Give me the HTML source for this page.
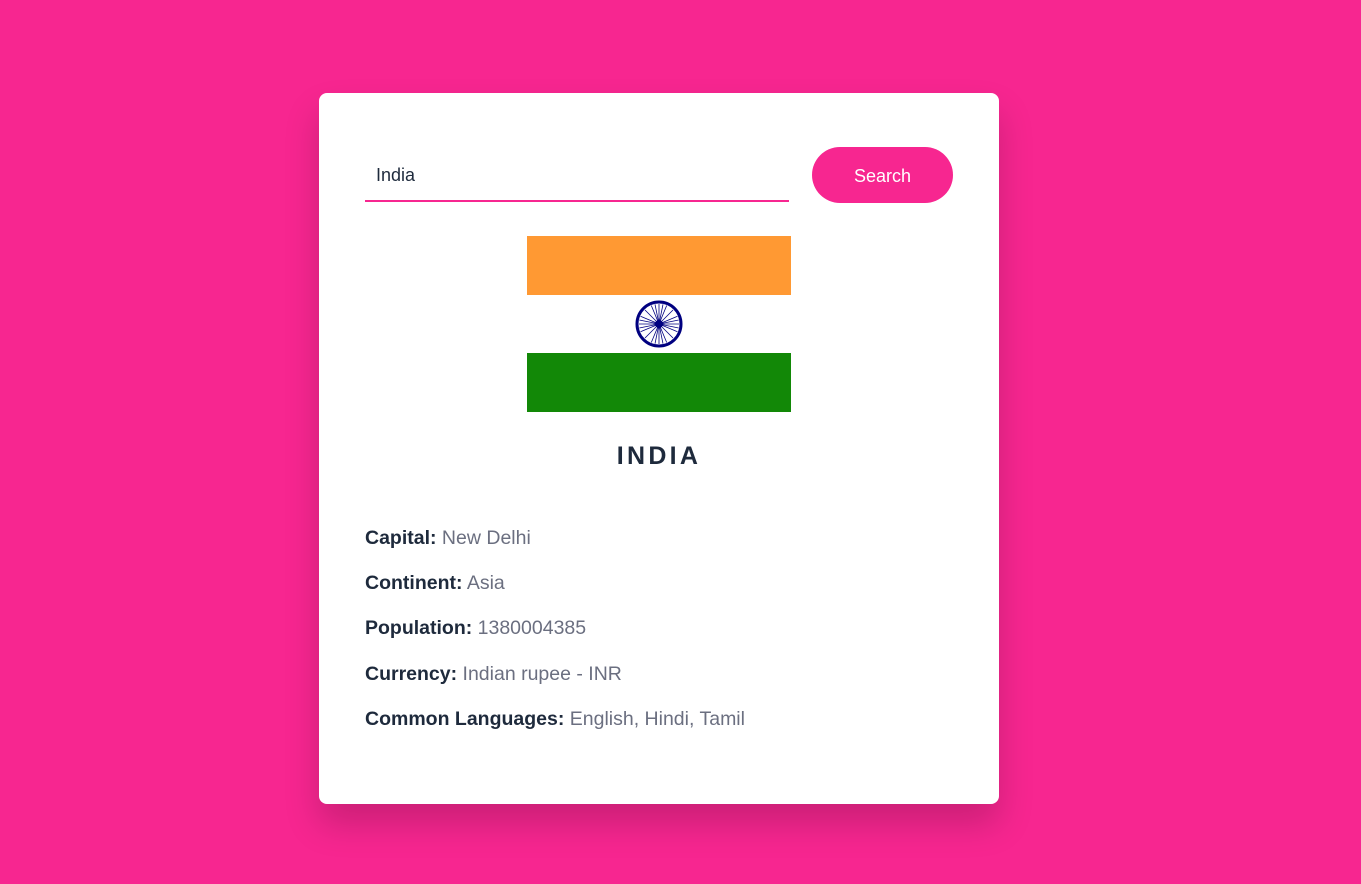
<!DOCTYPE html>
<html><head><style>
html,body{margin:0;padding:0;}
body{width:1361px;height:884px;background:#f72690;font-family:"Liberation Sans",sans-serif;position:relative;overflow:hidden;}
.card{position:absolute;left:319px;top:93px;width:680px;height:711px;background:#fff;border-radius:8px;box-shadow:0 20px 35px rgba(0,0,0,0.18);}
.inp{position:absolute;left:46px;top:54px;width:424px;height:53px;border-bottom:2px solid #f72690;}
.inp span{position:absolute;left:11px;top:18px;font-size:18px;color:#1e2a3c;}
.btn{position:absolute;left:493px;top:54px;width:141px;height:56px;border-radius:28px;background:#f72690;color:#fff;font-size:18px;text-align:center;line-height:58px;}
.flag{position:absolute;left:208px;top:143px;width:264px;height:176px;}
h2{position:absolute;left:0;width:680px;top:349px;margin:0;text-align:center;font-size:25px;letter-spacing:3.3px;color:#1e2a3c;font-weight:bold;}
.row{position:absolute;left:46px;font-size:19.5px;color:#6b6f80;white-space:nowrap;}
.row b{color:#1e2a3c;font-weight:bold;}
</style></head><body>
<div class="card">
<div class="inp"><span>India</span></div>
<div class="btn">Search</div>
<svg class="flag" viewBox="0 0 264 176">
<rect width="264" height="59" fill="#ff9933"/>
<rect y="59" width="264" height="58" fill="#fff"/>
<rect y="117" width="264" height="59" fill="#128807"/>
<circle cx="132" cy="88" r="22" fill="none" stroke="#000080" stroke-width="3"/>
<circle cx="132" cy="88" r="4" fill="#000080"/>
<g stroke="#000080" stroke-width="0.8">
<line x1="112" y1="88" x2="152" y2="88"/><line x1="132" y1="68" x2="132" y2="108"/>
<line x1="118" y1="74" x2="146" y2="102"/><line x1="146" y1="74" x2="118" y2="102"/>
<line x1="113.5" y1="80.3" x2="150.5" y2="95.7"/><line x1="113.5" y1="95.7" x2="150.5" y2="80.3"/>
<line x1="124.3" y1="69.5" x2="139.7" y2="106.5"/><line x1="139.7" y1="69.5" x2="124.3" y2="106.5"/>
<line x1="112.3" y1="84" x2="151.7" y2="92"/><line x1="112.3" y1="92" x2="151.7" y2="84"/>
<line x1="128" y1="68.3" x2="136" y2="107.7"/><line x1="136" y1="68.3" x2="128" y2="107.7"/>
</g>
</svg>
<h2>INDIA</h2>
<div class="row" style="top:434px"><b>Capital:</b> New Delhi</div>
<div class="row" style="top:479px"><b>Continent:</b> Asia</div>
<div class="row" style="top:524px"><b>Population:</b> 1380004385</div>
<div class="row" style="top:570px"><b>Currency:</b> Indian rupee - INR</div>
<div class="row" style="top:615px"><b>Common Languages:</b> English, Hindi, Tamil</div>
</div>
</body></html>
